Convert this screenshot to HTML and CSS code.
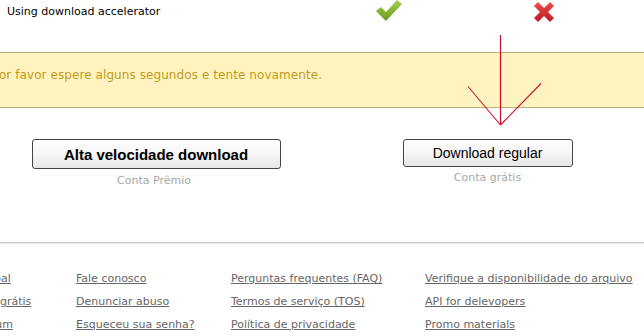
FILE: index.html
```html
<!DOCTYPE html>
<html lang="pt">
<head>
<meta charset="utf-8">
<title>Download</title>
<link rel="stylesheet" href="styles.css">
</head>
<body>
<div class="page">
  <div class="compare-row">
    <div class="compare-label">Using download accelerator</div>
    <svg class="icon-check" width="26" height="22" viewBox="0 0 26 22">
      <defs>
        <linearGradient id="g" x1="0" y1="0" x2="0" y2="1">
          <stop offset="0" stop-color="#a6d04e"/>
          <stop offset="1" stop-color="#6a9a1a"/>
        </linearGradient>
      </defs>
      <polygon points="0,11 5,7 10,12 21,0 26,4 10,21" fill="url(#g)"/>
    </svg>
    <svg class="icon-cross" width="20" height="20" viewBox="0 0 20 20">
      <defs>
        <linearGradient id="r" x1="0" y1="0" x2="0" y2="1">
          <stop offset="0" stop-color="#ee4a4a"/>
          <stop offset="1" stop-color="#b81c22"/>
        </linearGradient>
      </defs>
      <polygon points="0,4 4,0 10,6 16,0 20,4 14,10 20,16 16,20 10,14 4,20 0,16 6,10" fill="url(#r)"/>
    </svg>
  </div>

  <div class="notice"><span class="notice-text">Por favor espere alguns segundos e tente novamente.</span></div>

  <div class="choices">
    <div class="choice choice-premium">
      <button class="btn btn-premium">Alta velocidade download</button>
      <div class="choice-note">Conta Prêmio</div>
    </div>
    <div class="choice choice-free">
      <button class="btn btn-free">Download regular</button>
      <div class="choice-note">Conta grátis</div>
    </div>
  </div>

  <div class="separator"></div>

  <div class="footer">
    <div class="footer-col">
      <a href="#">Principal</a>
      <a href="#">Conta grátis</a>
      <a href="#">Premium</a>
    </div>
    <div class="footer-col">
      <a href="#">Fale conosco</a>
      <a href="#">Denunciar abuso</a>
      <a href="#">Esqueceu sua senha?</a>
    </div>
    <div class="footer-col">
      <a href="#">Perguntas frequentes (FAQ)</a>
      <a href="#">Termos de serviço (TOS)</a>
      <a href="#">Política de privacidade</a>
    </div>
    <div class="footer-col">
      <a href="#">Verifique a disponibilidade do arquivo</a>
      <a href="#">API for delevopers</a>
      <a href="#">Promo materials</a>
    </div>
  </div>

  <svg class="arrow" width="644" height="336" viewBox="0 0 644 336">
    <line x1="500.5" y1="35" x2="500.5" y2="125" stroke="#c8102e" stroke-width="1.2"/>
    <line x1="468" y1="86.5" x2="500.5" y2="125" stroke="#c8102e" stroke-width="1.1"/>
    <line x1="541" y1="83.5" x2="500.5" y2="125" stroke="#c8102e" stroke-width="1.1"/>
  </svg>
</div>
</body>
</html>
```

FILE: styles.css
```css
html, body {
  margin: 0;
  padding: 0;
  background: #ffffff;
  overflow: hidden;
}

.page {
  position: relative;
  width: 644px;
  height: 336px;
  overflow: hidden;
  font-family: "DejaVu Sans", Verdana, sans-serif;
}

.compare-row {
  display: flex;
  align-items: flex-start;
  height: 25px;
  padding-left: 7px;
}

.compare-label {
  width: 369px;
  padding-top: 5px;
  font-size: 11px;
  line-height: 14px;
  color: #000;
  white-space: nowrap;
}

.icon-check {
  display: block;
  flex: none;
}

.icon-cross {
  display: block;
  flex: none;
  margin-left: 132px;
  margin-top: 2px;
}

.notice {
  margin-top: 27px;
  background: #fff4c0;
  border-top: 1px solid #c4b07a;
  border-bottom: 1px solid #c4b07a;
  padding-top: 14px;
  box-sizing: content-box;
  height: 40px;
  font-size: 12px;
  line-height: 16px;
  color: #c09a22;
  white-space: nowrap;
}

.notice-text {
  display: inline-block;
  margin-left: -8px;
  letter-spacing: 0.08px;
}

.choices {
  display: grid;
  grid-template-columns: 312px 351px;
  margin-top: 31px;
}

.choice {
  display: flex;
  flex-direction: column;
  align-items: center;
}

.btn {
  display: block;
  margin: 0;
  padding: 0;
  border: 1px solid #3f4549;
  border-radius: 3px;
  background: linear-gradient(#ffffff 0%, #f6f6f6 50%, #e6e6e6 100%);
  color: #000;
  font-family: "Liberation Sans", Arial, sans-serif;
  cursor: pointer;
}

.btn-premium {
  width: 249px;
  height: 30px;
  font-size: 15px;
  font-weight: bold;
}

.btn-free {
  width: 170px;
  height: 28px;
  font-size: 14px;
  font-weight: normal;
}

.choice-note {
  font-size: 11px;
  line-height: 14px;
  color: #a8a8a8;
}

.choice-premium .choice-note {
  margin-top: 5px;
  margin-left: -4px;
}

.choice-free .choice-note {
  margin-top: 4px;
}

.separator {
  margin-top: 54px;
  border-top: 1px solid #cccccc;
  border-bottom: 1px solid #e6e6e6;
}

.footer {
  display: grid;
  grid-template-columns: 112px 155px 194px auto;
  margin-left: -36px;
  margin-top: 23px;
}

.footer-col {
  display: flex;
  flex-direction: column;
}

.footer-col a {
  font-size: 11px;
  line-height: 23px;
  color: #666666;
  text-decoration: underline;
  white-space: nowrap;
}

.arrow {
  position: absolute;
  left: 0;
  top: 0;
  pointer-events: none;
}
```
